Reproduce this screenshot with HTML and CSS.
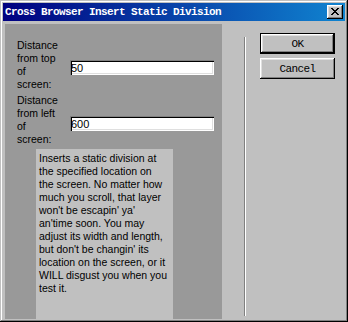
FILE: index.html
```html
<!DOCTYPE html>
<html lang="en">
<head>
<meta charset="UTF-8">
<title>Cross Browser Insert Static Division</title>
<link rel="stylesheet" href="styles.css">
</head>
<body>

<div class="window">
  <div class="titlebar">
    <span class="title">Cross Browser Insert Static Division</span>
    <button class="close" title="Close">
      <svg width="8" height="7" viewBox="0 0 8 7" shape-rendering="crispEdges">
        <path d="M0 0h2v1h-2zM6 0h2v1h-2zM1 1h2v1h-2zM5 1h2v1h-2zM2 2h4v1h-4zM3 3h2v1h-2zM2 4h4v1h-4zM1 5h2v1h-2zM5 5h2v1h-2zM0 6h2v1h-2zM6 6h2v1h-2z" fill="#000"/>
      </svg>
    </button>
  </div>
  <div class="content">
    <div class="panel">
      <div class="field">
        <label for="fromTop">Distance from top of screen:</label>
        <input type="text" id="fromTop" value="50">
      </div>
      <div class="field">
        <label for="fromLeft">Distance from left of screen:</label>
        <input type="text" id="fromLeft" value="600">
      </div>
      <div class="desc">Inserts a static division at the specified location on the screen. No matter how much you scroll, that layer won't be escapin' ya' an'time soon. You may adjust its width and length, but don't be changin' its location on the screen, or it WILL disgust you when you test it.</div>
    </div>
    <div class="sep"></div>
    <div class="actions">
      <button class="btn default">OK</button>
      <button class="btn">Cancel</button>
    </div>
  </div>
</div>

</body>
</html>
```

FILE: styles.css
```css
body { margin: 0; background: #c0c0c0; font-family: "Liberation Sans", Arial, sans-serif; }
.window { width: 348px; height: 322px; box-sizing: border-box; padding: 3px; background: #c0c0c0; box-shadow: inset -1px -1px #000, inset 1px 1px #c0c0c0, inset -2px -2px #808080, inset 2px 2px #fff; display: flex; flex-direction: column; }
.titlebar { height: 18px; flex: none; display: flex; align-items: center; justify-content: space-between; padding: 0 2px; background: linear-gradient(90deg, #000080, #1084d0); }
.title { color: #fff; font-family: "Liberation Mono", "Courier New", monospace; font-weight: bold; font-size: 11px; letter-spacing: -0.6px; }
.close { width: 16px; height: 14px; padding: 0; border: none; background: #c0c0c0; display: flex; align-items: center; justify-content: center; box-shadow: inset -1px -1px #000, inset 1px 1px #fff, inset -2px -2px #808080, inset 2px 2px #dfdfdf; }
.close svg { display: block; margin: 0 1px 1px 0; }
.content { flex: 1; display: flex; }
.panel { width: 205px; margin: 3px 0 0 2px; padding: 15px 0 0 12px; background: #999; display: flex; flex-direction: column; }
.field { display: grid; grid-template-columns: 44px 144px; column-gap: 9px; align-items: start; margin-bottom: 3px; }
.field label { font-size: 10.5px; line-height: 13px; color: #000; }
.field input { margin-top: 21px; width: 144px; height: 15px; box-sizing: border-box; border: none; padding: 0 0 0 1px; background: #fff; font-family: "Liberation Sans", Arial, sans-serif; font-size: 11px; color: #000; box-shadow: inset 1px 1px #808080, inset 2px 2px #000, inset -1px -1px #fff, inset -2px -2px #dfdfdf; outline: none; }
.field:nth-child(2) input { margin-top: 22px; }
.desc { flex: 1; width: 129.6px; margin-left: 19px; padding: 3px 4.4px 0 3px; background: #c0c0c0; font-size: 10.5px; line-height: 13px; color: #000; }
.sep { width: 0; margin: 16px 0 3px 22px; border-left: 1px solid #808080; border-right: 1px solid #fff; }
.actions { margin: 12px 0 0 14px; display: flex; flex-direction: column; gap: 4px; }
.btn { width: 75px; height: 21px; padding: 0; border: none; background: #c0c0c0; font-family: "Liberation Mono", "Courier New", monospace; font-size: 11px; letter-spacing: -0.6px; color: #000; box-shadow: inset -1px -1px #000, inset 1px 1px #fff, inset -2px -2px #808080, inset 2px 2px #dfdfdf; }
.btn.default { box-shadow: inset 0 0 0 1px #000, inset -2px -2px #000, inset 2px 2px #fff, inset -3px -3px #808080, inset 3px 3px #dfdfdf; }
```
